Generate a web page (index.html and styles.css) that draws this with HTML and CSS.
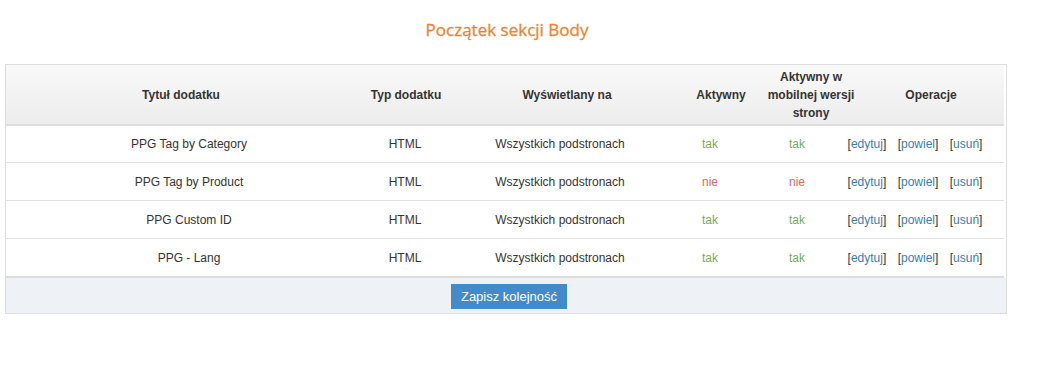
FILE: index.html
```html
<!DOCTYPE html>
<html lang="pl">
<head>
    <meta charset="UTF-8">
    <meta name="viewport" content="width=device-width, initial-scale=1.0">
    <title>Dodatki - Body</title>
    <link rel="stylesheet" href="styles.css">
</head>
<body>
    <h2 class="section-title">Początek sekcji Body</h2>

    <div class="addons">
        <table class="addons-head">
            <colgroup>
                <col style="width: 350px">
                <col style="width: 100px">
                <col style="width: 222px">
                <col style="width: 86px">
                <col style="width: 94px">
                <col style="width: 146px">
            </colgroup>
            <tr>
                <th>Tytuł dodatku</th>
                <th>Typ dodatku</th>
                <th>Wyświetlany na</th>
                <th>Aktywny</th>
                <th class="narrow">Aktywny w mobilnej wersji strony</th>
                <th>Operacje</th>
            </tr>
        </table>

        <table class="addons-body">
            <colgroup>
                <col style="width: 336px">
                <col style="width: 126px">
                <col style="width: 184px">
                <col style="width: 116px">
                <col style="width: 58px">
                <col style="width: 178px">
            </colgroup>
            <tr>
                <td class="name">PPG Tag by Category</td>
                <td>HTML</td>
                <td>Wszystkich podstronach</td>
                <td class="yes">tak</td>
                <td class="yes">tak</td>
                <td class="ops">[<a href="#">edytuj</a>] [<a href="#">powiel</a>] [<a href="#">usuń</a>]</td>
            </tr>
            <tr>
                <td class="name">PPG Tag by Product</td>
                <td>HTML</td>
                <td>Wszystkich podstronach</td>
                <td class="no">nie</td>
                <td class="no">nie</td>
                <td class="ops">[<a href="#">edytuj</a>] [<a href="#">powiel</a>] [<a href="#">usuń</a>]</td>
            </tr>
            <tr>
                <td class="name">PPG Custom ID</td>
                <td>HTML</td>
                <td>Wszystkich podstronach</td>
                <td class="yes">tak</td>
                <td class="yes">tak</td>
                <td class="ops">[<a href="#">edytuj</a>] [<a href="#">powiel</a>] [<a href="#">usuń</a>]</td>
            </tr>
            <tr>
                <td class="name">PPG - Lang</td>
                <td>HTML</td>
                <td>Wszystkich podstronach</td>
                <td class="yes">tak</td>
                <td class="yes">tak</td>
                <td class="ops">[<a href="#">edytuj</a>] [<a href="#">powiel</a>] [<a href="#">usuń</a>]</td>
            </tr>
        </table>

        <div class="addons-foot">
            <button class="button">Zapisz kolejność</button>
        </div>
    </div>
</body>
</html>
```

FILE: styles.css
```css
body {
    font-family: "Liberation Sans", Arial, sans-serif;
    font-size: 12px;
    color: #333;
    margin: 0;
    padding: 0;
    background-color: #fff;
}
.section-title {
    font-family: "Open Sans", sans-serif;
    font-weight: normal;
    font-size: 17px;
    color: #ee8230;
    text-align: center;
    margin: 17px 26px 0 0;
    height: 47px;
    line-height: 26px;
    -webkit-text-stroke: 0.3px #ee8230;
}
.addons {
    margin-left: 5px;
    width: 1000px;
    border: 1px solid #ddd;
}
.addons table {
    width: 998px;
    border-collapse: collapse;
    table-layout: fixed;
}
.addons-head th {
    height: 59px;
    padding: 0 4px;
    font-weight: bold;
    line-height: 18px;
    text-align: center;
    background: linear-gradient(to bottom, #f9f9f9, #ececec);
    border-bottom: 2px solid #dddddd;
}
.addons-head th.narrow {
    padding: 0 1px;
}
.addons-body td {
    height: 37px;
    padding: 0;
    text-align: center;
    border-bottom: 1px solid #e2e2e2;
}
.addons-body tr:first-child td {
    height: 36px;
}
.addons-body tr:last-child td {
    border-bottom: 2px solid #dddddd;
}
.addons-body td.name {
    padding-left: 30px;
}
.yes {
    color: #76a95a;
}
.no {
    color: #e0685c;
}
.ops {
    word-spacing: 8px;
}
.ops a {
    color: #3a7cb5;
    text-decoration: none;
    word-spacing: 0;
}
.addons-foot {
    background-color: #eef1f5;
    height: 35px;
    padding-top: 6px;
    box-sizing: border-box;
    text-align: center;
}
.button {
    font-family: "Liberation Sans", Arial, sans-serif;
    font-size: 13px;
    height: 25px;
    margin-left: 6px;
    padding: 0 10px;
    background-color: #428bca;
    color: white;
    border: none;
    border-radius: 0;
    cursor: pointer;
}
.button:hover {
    background-color: #3071a9;
}
```
